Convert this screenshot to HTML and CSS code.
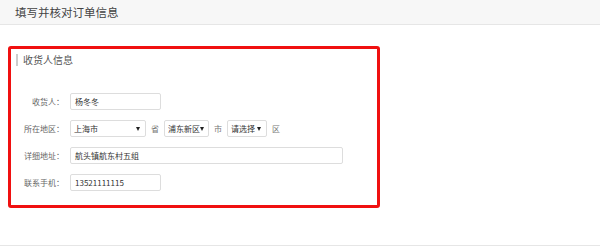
FILE: index.html
```html
<!DOCTYPE html>
<html lang="zh-CN">
<head>
<meta charset="utf-8">
<title>填写并核对订单信息</title>
<link rel="stylesheet" href="styles.css">
</head>
<body>
<div class="header">填写并核对订单信息</div>
<div class="main">
  <div class="box">
    <div class="section-title">收货人信息</div>
    <div class="form">
      <div class="row">
        <label class="label">收货人：</label>
        <div class="input short">杨冬冬</div>
      </div>
      <div class="row">
        <label class="label">所在地区：</label>
        <div class="region">
          <div class="select s1"><span>上海市</span><span class="arrow"></span></div>
          <span class="unit">省</span>
          <div class="select s2"><span>浦东新区</span><span class="arrow"></span></div>
          <span class="unit">市</span>
          <div class="select s3"><span>请选择</span><span class="arrow"></span></div>
          <span class="unit">区</span>
        </div>
      </div>
      <div class="row">
        <label class="label">详细地址：</label>
        <div class="input long">航头镇航东村五组</div>
      </div>
      <div class="row">
        <label class="label">联系手机：</label>
        <div class="input short">13521111115</div>
      </div>
    </div>
  </div>
</div>
<div class="footer"></div>
</body>
</html>
```
FILE: styles.css
```css
* { box-sizing: border-box; }
html, body { margin: 0; padding: 0; background: #fff; }
body {
  width: 600px;
  height: 248px;
  overflow: hidden;
  font-family: "Microsoft YaHei", "Noto Sans CJK SC", "Noto Sans", sans-serif;
  color: #333;
}
.header {
  height: 25px;
  line-height: 24px;
  padding-left: 15px;
  background: #f7f7f7;
  border-bottom: 1px solid #e6e6e6;
  font-size: 11.5px;
  color: #444;
}
.main {
  height: 220px;
  padding: 21px 0 0 8px;
}
.box {
  width: 372px;
  height: 162px;
  border: 3px solid #f01010;
  border-radius: 3px;
  padding: 4px 0 0 5px;
}
.section-title {
  font-size: 10px;
  line-height: 12px;
  color: #555;
  border-left: 2px solid #ccc;
  padding-left: 5px;
  margin-top: 1px;
}
.form {
  margin-top: 27px;
  display: flex;
  flex-direction: column;
  gap: 10px;
}
.row {
  display: flex;
  align-items: center;
  height: 17px;
}
.label {
  width: 48px;
  text-align: right;
  font-size: 8px;
  color: #666;
  margin-right: 6px;
  white-space: nowrap;
}
.input {
  height: 17px;
  border: 1px solid #ddd;
  border-radius: 2px;
  font-size: 8px;
  line-height: 15px;
  padding-left: 4px;
  color: #333;
  white-space: nowrap;
}
.short { width: 91px; }
.long { width: 273px; }
.region {
  display: flex;
  align-items: center;
}
.select {
  height: 17px;
  border: 1px solid #ddd;
  border-radius: 2px;
  font-size: 8px;
  line-height: 15px;
  padding: 0 5px 0 3px;
  display: flex;
  justify-content: space-between;
  align-items: center;
  color: #333;
  white-space: nowrap;
}
.s1 { width: 76px; }
.s2 { width: 45px; }
.s3 { width: 40px; }
.arrow {
  width: 0;
  height: 0;
  border-left: 2px solid transparent;
  border-right: 2px solid transparent;
  border-top: 4px solid #222;
}
.unit {
  font-size: 8px;
  color: #777;
  margin: 0 5px;
}
.footer {
  border-top: 1px solid #e6e6e6;
  height: 3px;
}
```
